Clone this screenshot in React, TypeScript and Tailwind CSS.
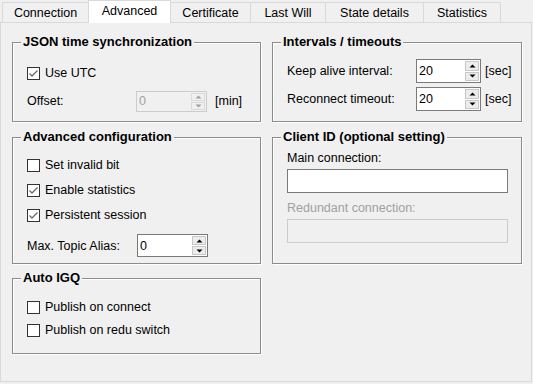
import React from "react";

const Check = ({ checked }: { checked?: boolean }) => (
  <span className="w-[13px] h-[13px] border border-[#333333] bg-white flex items-center justify-center shrink-0">
    {checked && (
      <svg width="11" height="11" viewBox="0 0 11 11">
        <path d="M1.5 5.5 L4 8 L9.5 2.5" fill="none" stroke="#6a6a6a" strokeWidth="1.3" />
      </svg>
    )}
  </span>
);

const CheckRow = ({ label, checked, className }: { label: string; checked?: boolean; className?: string }) => (
  <div className={`flex items-center h-[20px] gap-[5px] ${className ?? ""}`}>
    <Check checked={checked} />
    <span>{label}</span>
  </div>
);

const Arrow = ({ up, disabled }: { up?: boolean; disabled?: boolean }) => (
  <svg width="7" height="4" viewBox="0 0 7 4">
    <path d={up ? "M0.5 3.5 L3.5 0.5 L6.5 3.5 Z" : "M0.5 0.5 L3.5 3.5 L6.5 0.5 Z"} fill={disabled ? "#a0a0a0" : "#000"} />
  </svg>
);

const Spin = ({ value, size, disabled }: { value: string; size: string; disabled?: boolean }) => (
  <div
    className={`flex border ${size} ${
      disabled ? "border-[#cccccc] bg-[#f0f0f0] text-[#a0a0a0]" : "border-[#7a7a7a] bg-white text-black"
    }`}
  >
    <div className="flex-1 flex items-center pl-[2px]">{value}</div>
    <div className="w-[16px] flex flex-col p-[1px] gap-[1px]">
      <div className={`flex-1 flex items-center justify-center border ${disabled ? "border-[#dadada] bg-[#f0f0f0]" : "border-[#c8c8c8] bg-[#ececec]"}`}>
        <Arrow up disabled={disabled} />
      </div>
      <div className={`flex-1 flex items-center justify-center border ${disabled ? "border-[#dadada] bg-[#f0f0f0]" : "border-[#c8c8c8] bg-[#ececec]"}`}>
        <Arrow disabled={disabled} />
      </div>
    </div>
  </div>
);

const Group = ({ title, className, children }: { title: string; className: string; children?: React.ReactNode }) => (
  <div className={`relative border border-[#8c8c8c] shadow-[inset_1px_1px_0_#ffffff,1px_1px_0_#ffffff] pl-[14px] ${className}`}>
    <span className="absolute -top-[9px] left-[8px] px-[2px] bg-[#f0f0f0] font-bold text-[13px] leading-[16px] text-black">
      {title}
    </span>
    {children}
  </div>
);

const Tab = ({ label, className }: { label: string; className: string }) => (
  <div className={`flex items-center justify-center border-[#d9d9d9] ${className}`}>{label}</div>
);

export default function App() {
  return (
    <div className="w-[533px] h-[384px] bg-[#f0f0f0] font-['Liberation_Sans',Arial,sans-serif] text-[12.5px] leading-[16px] text-black overflow-hidden">
      <div className="h-[22px] flex items-end pl-[2px]">
        <Tab label="Connection" className="w-[86px] h-[20px] border-t border-l bg-[#f0f0f0]" />
        <Tab label="Advanced" className="w-[83px] h-[23px] -mb-px border-t border-l border-r bg-white relative z-10 pb-[2px]" />
        <Tab label="Certificate" className="w-[80px] h-[20px] border-t border-r bg-[#f0f0f0]" />
        <Tab label="Last Will" className="w-[75px] h-[20px] border-t border-r bg-[#f0f0f0]" />
        <Tab label="State details" className="w-[98px] h-[20px] border-t border-r bg-[#f0f0f0]" />
        <Tab label="Statistics" className="w-[77px] h-[20px] border-t border-r bg-[#f0f0f0]" />
      </div>
      <div className="w-[532px] h-[360px] border border-[#d9d9d9] bg-[#f0f0f0] flex gap-[11px] pl-[11px] pt-[19px]">
        <div className="w-[249px] flex flex-col">
          <Group title="JSON time synchronization" className="h-[80px] pt-[20px]">
            <CheckRow label="Use UTC" checked />
            <div className="flex items-center h-[22px] mt-[7px]">
              <span className="w-[109px]">Offset:</span>
              <Spin value="0" size="w-[71px] h-[21px]" disabled />
              <span className="ml-[8px]">[min]</span>
            </div>
          </Group>
          <Group title="Advanced configuration" className="h-[127px] mt-[15px] pt-[17px]">
            <CheckRow label="Set invalid bit" />
            <CheckRow label="Enable statistics" checked className="mt-[5px]" />
            <CheckRow label="Persistent session" checked className="mt-[5px]" />
            <div className="flex items-center h-[23px] mt-[9px]">
              <span className="w-[110px]">Max. Topic Alias:</span>
              <Spin value="0" size="w-[71px] h-[23px]" />
            </div>
          </Group>
          <Group title="Auto IGQ" className="h-[76px] mt-[14px] pt-[18px]">
            <CheckRow label="Publish on connect" />
            <CheckRow label="Publish on redu switch" className="mt-[3px]" />
          </Group>
        </div>
        <div className="w-[250px] flex flex-col">
          <Group title="Intervals / timeouts" className="h-[80px] pt-[16px]">
            <div className="flex items-center h-[24px]">
              <span className="w-[129px]">Keep alive interval:</span>
              <Spin value="20" size="w-[65px] h-[24px]" />
              <span className="ml-[4px]">[sec]</span>
            </div>
            <div className="flex items-center h-[24px] mt-[4px]">
              <span className="w-[129px]">Reconnect timeout:</span>
              <Spin value="20" size="w-[65px] h-[24px]" />
              <span className="ml-[4px]">[sec]</span>
            </div>
          </Group>
          <Group title="Client ID (optional setting)" className="h-[127px] mt-[15px] pt-[12px]">
            <div className="h-[16px]">Main connection:</div>
            <div className="mt-[3px] w-[221px] h-[24px] border border-[#7a7a7a] bg-white" />
            <div className="h-[16px] mt-[7px] text-[#a0a0a0]">Redundant connection:</div>
            <div className="mt-[3px] w-[221px] h-[24px] border border-[#cccccc] bg-[#f0f0f0]" />
          </Group>
        </div>
      </div>
    </div>
  );
}
